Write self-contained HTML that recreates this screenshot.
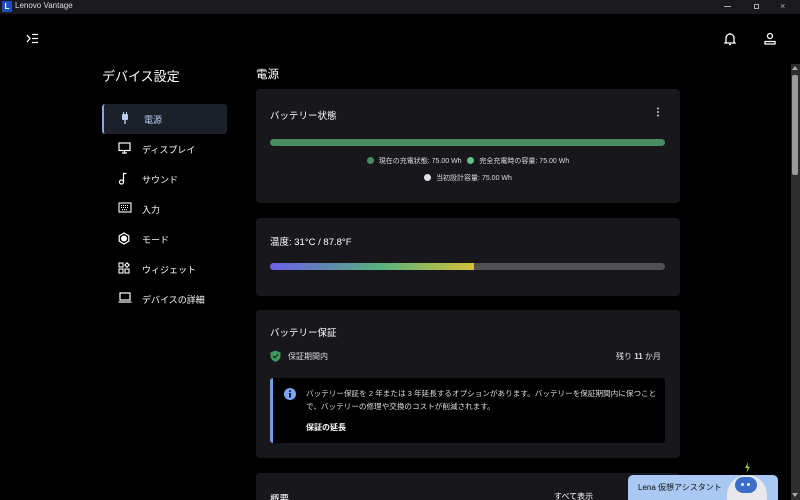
<!DOCTYPE html>
<html><head><meta charset="utf-8"><style>
*{margin:0;padding:0;box-sizing:border-box}
html,body{width:800px;height:500px;overflow:hidden}
body{background:#000;color:#fff;font-family:"Liberation Sans","Noto Sans CJK JP",sans-serif;position:relative}
.abs{position:absolute}
.tb{left:0;top:0;width:800px;height:14px;background:#1a1a1e}
.card{position:absolute;left:256px;width:424px;background:#18181c;border-radius:4px}
.nav{position:absolute;left:102px;width:125px;height:30px;font-size:9px;color:#fff}
.nav svg{position:absolute;left:16px;top:8px}
.nav span{position:absolute;left:40px;top:9px}
.dot{display:inline-block;width:7px;height:7px;border-radius:50%;vertical-align:-1px;margin-right:5px}
</style></head><body>
<div class="abs tb"></div>
<div class="abs" style="left:2px;top:1px;width:10px;height:11px;background:#1b4fb8;font-size:8px;font-weight:bold;text-align:center;line-height:11px">L</div>
<div class="abs" style="left:15px;top:1px;font-size:8px;color:#ddd">Lenovo Vantage</div>
<div class="abs" style="left:724px;top:6px;width:7px;height:1px;background:#aaa"></div>
<div class="abs" style="left:754px;top:4px;width:5px;height:5px;border:1px solid #aaa"></div>
<div class="abs" style="left:780px;top:1px;font-size:9px;color:#aaa">×</div>

<svg class="abs" style="left:26px;top:33px" width="13" height="11" viewBox="0 0 13 11" stroke="#fff" stroke-width="1.3" fill="none"><path d="M1 2l3 3.5-3 3.5M6 1.5h6M6 5.5h6M6 9.5h6"/></svg>
<svg class="abs" style="left:724px;top:32px" width="12" height="14" viewBox="0 0 12 14" stroke="#fff" stroke-width="1.3" fill="none"><path d="M2 10V6a4 4 0 018 0v4l1 1H1zM5 12.5h2M6 1v1"/></svg>
<svg class="abs" style="left:764px;top:32px" width="12" height="13" viewBox="0 0 12 13" stroke="#fff" stroke-width="1.3" fill="none"><circle cx="6" cy="4" r="2.5"/><path d="M1 12V9.5h10V12z"/></svg>

<div class="abs" style="left:102px;top:66px;font-size:13px">デバイス設定</div>
<div class="nav" style="top:104px;background:#1c2029;border-radius:3px;border-left:2px solid #7fa8f0;color:#b9cdf5"><svg width="10" height="12" viewBox="0 0 10 12" fill="#b9cdf5"><rect x="2" y="2" width="6" height="6" rx="1"/><rect x="3" y="0" width="1" height="3"/><rect x="6" y="0" width="1" height="3"/><rect x="4.3" y="7" width="1.4" height="5"/></svg><span>電源</span></div>
<div class="nav" style="top:134px"><svg width="13" height="12" viewBox="0 0 13 12" stroke="#fff" stroke-width="1.2" fill="none"><rect x="1" y="1" width="11" height="7.5"/><path d="M4 11h5M6.5 8.5V11"/></svg><span>ディスプレイ</span></div>
<div class="nav" style="top:164px"><svg width="10" height="13" viewBox="0 0 10 13" stroke="#fff" stroke-width="1.2" fill="none"><circle cx="3.5" cy="10" r="2"/><path d="M5.5 10V1.5h3"/></svg><span>サウンド</span></div>
<div class="nav" style="top:194px"><svg width="14" height="11" viewBox="0 0 14 11" stroke="#fff" stroke-width="1.1" fill="none"><rect x="1" y="1" width="12" height="9"/><path d="M3 3.5h8M3 5.5h8M4 7.7h6" stroke-dasharray="1 1"/></svg><span>入力</span></div>
<div class="nav" style="top:224px"><svg width="12" height="13" viewBox="0 0 12 13" fill="none" stroke="#fff" stroke-width="1.2"><path d="M6 1l4.8 2.8v5.4L6 12 1.2 9.2V3.8z"/><circle cx="6" cy="6.5" r="2.4" fill="#fff"/></svg><span>モード</span></div>
<div class="nav" style="top:254px"><svg width="12" height="12" viewBox="0 0 12 12" stroke="#fff" stroke-width="1.1" fill="none"><rect x="1" y="1" width="4" height="4"/><rect x="1" y="7" width="4" height="4"/><rect x="7" y="7" width="4" height="4"/><path d="M9 0.8l2.2 2.2L9 5.2 6.8 3z"/></svg><span>ウィジェット</span></div>
<div class="nav" style="top:284px"><svg width="14" height="11" viewBox="0 0 14 11" stroke="#fff" stroke-width="1.2" fill="none"><rect x="2" y="1" width="10" height="7"/><path d="M0.5 10h13"/></svg><span>デバイスの詳細</span></div>

<div class="abs" style="left:256px;top:66px;font-size:11.5px">電源</div>

<div class="card" style="top:89px;height:114px">
<div class="abs" style="left:14px;top:19px;font-size:9.5px">バッテリー状態</div>
<div class="abs" style="left:397px;top:18px;font-size:10px;font-weight:bold">⋮</div>
<div class="abs" style="left:14px;top:50px;width:395px;height:7px;border-radius:4px;background:#4a8d63"></div>
<div class="abs" style="left:0;top:67px;width:424px;text-align:center;font-size:7px;color:#ddd"><span class="dot" style="background:#4a8d63"></span>現在の充電状態: 75.00 Wh&nbsp;&nbsp;&nbsp;<span class="dot" style="background:#5fc288"></span>完全充電時の容量: 75.00 Wh</div>
<div class="abs" style="left:0;top:84px;width:424px;text-align:center;font-size:7px;color:#ddd"><span class="dot" style="background:#dde3f0"></span>当初設計容量: 75.00 Wh</div>
</div>

<div class="card" style="top:218px;height:78px">
<div class="abs" style="left:14px;top:16px;font-size:9.5px">温度:  31°C / 87.8°F</div>
<div class="abs" style="left:14px;top:45px;width:395px;height:7px;border-radius:4px;background:#505055;overflow:hidden"><div style="width:204px;height:7px;background:linear-gradient(90deg,#6a5ee8,#5ab27c 55%,#d6c037)"></div></div>
</div>

<div class="card" style="top:310px;height:148px">
<div class="abs" style="left:14px;top:15px;font-size:9.5px">バッテリー保証</div>
<svg class="abs" style="left:14px;top:40px" width="11" height="12" viewBox="0 0 11 12"><path d="M5.5 0.5L10.5 2.5V6c0 3-2.5 5-5 5.8C3 11 0.5 9 0.5 6V2.5z" fill="#3d9a5d"/><path d="M3 6l1.8 1.8L8 4.5" stroke="#18181c" stroke-width="1.2" fill="none"/></svg>
<div class="abs" style="left:32px;top:41px;font-size:8px;color:#ddd">保証期間内</div>
<div class="abs" style="left:360px;top:41px;font-size:8px;color:#ddd">残り <b>11</b> か月</div>
<div class="abs" style="left:14px;top:68px;width:395px;height:65px;background:#000;border-radius:3px;border-left:3px solid #6b9ff0">
<svg class="abs" style="left:11px;top:10px" width="12" height="12" viewBox="0 0 12 12"><circle cx="6" cy="6" r="6" fill="#7aa6f2"/><rect x="5.2" y="5" width="1.6" height="4.5" fill="#000"/><circle cx="6" cy="3.2" r="0.9" fill="#000"/></svg>
<div class="abs" style="left:33px;top:9px;width:358px;font-size:7.6px;line-height:13px;color:#ddd">バッテリー保証を 2 年または 3 年延長するオプションがあります。バッテリーを保証期間内に保つことで、バッテリーの修理や交換のコストが削減されます。</div>
<div class="abs" style="left:33px;top:44px;font-size:8px;font-weight:bold">保証の延長</div>
</div>
</div>

<div class="card" style="top:473px;height:27px;border-radius:4px 4px 0 0">
<div class="abs" style="left:14px;top:18px;font-size:9.5px">概要</div>
<div class="abs" style="left:298px;top:18px;font-size:8px">すべて表示</div>
</div>

<div class="abs" style="left:628px;top:475px;width:150px;height:25px;background:#a9c8f3;border-radius:5px 5px 0 0"></div>
<div class="abs" style="left:638px;top:482px;font-size:8px;color:#111">Lena 仮想アシスタント</div>
<div class="abs" style="left:727px;top:475px;width:40px;height:25px;background:#e8e8ec;border-radius:20px 20px 0 0"></div>
<div class="abs" style="left:735px;top:477px;width:22px;height:16px;background:#3d6ec9;border-radius:8px"></div>
<div class="abs" style="left:741px;top:483px;width:3px;height:3px;background:#fff;border-radius:50%"></div>
<div class="abs" style="left:747px;top:483px;width:3px;height:3px;background:#fff;border-radius:50%"></div>
<svg class="abs" style="left:744px;top:462px" width="7" height="11" viewBox="0 0 7 11"><path d="M4 0L1 6h2.5L2.5 11 6 4.5H3.5z" fill="#8fd03a"/></svg>

<div class="abs" style="left:791px;top:64px;width:9px;height:436px;background:#2e2e2e"></div>
<div class="abs" style="left:792px;top:75px;width:6px;height:100px;background:#9a9a9a;border-radius:2px"></div>
<div class="abs" style="left:792px;top:66px;width:0;height:0;border-left:3px solid transparent;border-right:3px solid transparent;border-bottom:4px solid #aaa"></div>
<div class="abs" style="left:792px;top:493px;width:0;height:0;border-left:3px solid transparent;border-right:3px solid transparent;border-top:4px solid #aaa"></div>
</body></html>
